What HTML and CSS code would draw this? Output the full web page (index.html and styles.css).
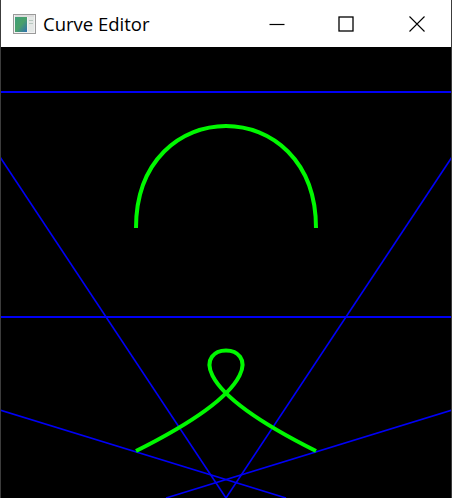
FILE: index.html
```html
<!DOCTYPE html>
<html>
<head>
<meta charset="utf-8">
<link rel="stylesheet" href="styles.css">
</head>
<body>
<div class="window">
  <div class="titlebar">
    <svg class="app-icon" width="23" height="20" viewBox="0 0 23 20">
      <defs>
        <linearGradient id="g" x1="0" y1="0" x2="1" y2="1">
          <stop offset="0" stop-color="#3f9f7a"/>
          <stop offset="0.5" stop-color="#4aa06a"/>
          <stop offset="1" stop-color="#2f6fb0"/>
        </linearGradient>
      </defs>
      <rect x="0.5" y="0.5" width="22" height="19" fill="#f2f2f2" stroke="#9a9a9a"/>
      <rect x="2" y="3" width="12" height="15" fill="url(#g)"/>
      <rect x="15" y="3" width="6" height="15" fill="#e4e8e6"/>
      <rect x="16" y="6" width="4" height="1" fill="#b8c8c0"/>
      <rect x="16" y="9" width="4" height="1" fill="#b8c8c0"/>
      <rect x="2" y="1.5" width="19" height="1" fill="#c8c8c8"/>
    </svg>
    <span class="title">Curve Editor</span>
    <div class="controls">
      <div class="btn shift">
        <svg width="16" height="16" viewBox="0 0 16 16"><path d="M0.5 8.5h15" stroke="#000" stroke-width="1.2" fill="none"/></svg>
      </div>
      <div class="btn shift">
        <svg width="16" height="16" viewBox="0 0 16 16"><rect x="1" y="1" width="14" height="14" stroke="#000" stroke-width="1.3" fill="none"/></svg>
      </div>
      <div class="btn">
        <svg width="16" height="16" viewBox="0 0 16 16"><path d="M0.5 0.5L15.5 15.5M15.5 0.5L0.5 15.5" stroke="#000" stroke-width="1.1" fill="none"/></svg>
      </div>
    </div>
  </div>
  <svg class="canvas" width="450" height="451" viewBox="1 47 450 451">
    <rect x="1" y="47" width="450" height="451" fill="#000"/>
    <g stroke="#0000f5" fill="none">
      <line x1="0" y1="92" x2="452" y2="92" stroke-width="2"/>
      <line x1="0" y1="317" x2="452" y2="317" stroke-width="2"/>
      <line x1="0" y1="157" x2="226" y2="498" stroke-width="1.6"/>
      <line x1="452" y1="157" x2="226" y2="498" stroke-width="1.6"/>
      <line x1="0" y1="410" x2="286" y2="498" stroke-width="1.6"/>
      <line x1="452" y1="410" x2="166" y2="498" stroke-width="1.6"/>
    </g>
    <g stroke="#00f800" stroke-width="4" fill="none">
      <path d="M136 228 C136 92 316 92 316 228"/>
      <path d="M136 451 C404 317 48 317 316 451"/>
    </g>
  </svg>
</div>
</body>
</html>
```
FILE: styles.css
```css
html, body {
  margin: 0;
  padding: 0;
  background: #000;
  overflow: hidden;
}
.window {
  width: 450px;
  height: 498px;
  border-left: 1px solid #3c3c3c;
  border-right: 1px solid #3c3c3c;
  background: #000;
  display: flex;
  flex-direction: column;
}
.titlebar {
  height: 47px;
  background: #fff;
  display: flex;
  align-items: center;
  flex: none;
}
.app-icon {
  margin-left: 12px;
  flex: none;
}
.title {
  margin-left: 7px;
  font-family: "Open Sans", "Noto Sans", sans-serif;
  font-size: 18.5px;
  color: #000;
  flex: 1;
}
.controls {
  display: flex;
  height: 100%;
}
.btn {
  width: 69px;
  height: 100%;
  display: flex;
  align-items: center;
  justify-content: center;
  box-sizing: border-box;
}
.btn.shift {
  padding-right: 4px;
}
.canvas {
  display: block;
  flex: none;
}
```
